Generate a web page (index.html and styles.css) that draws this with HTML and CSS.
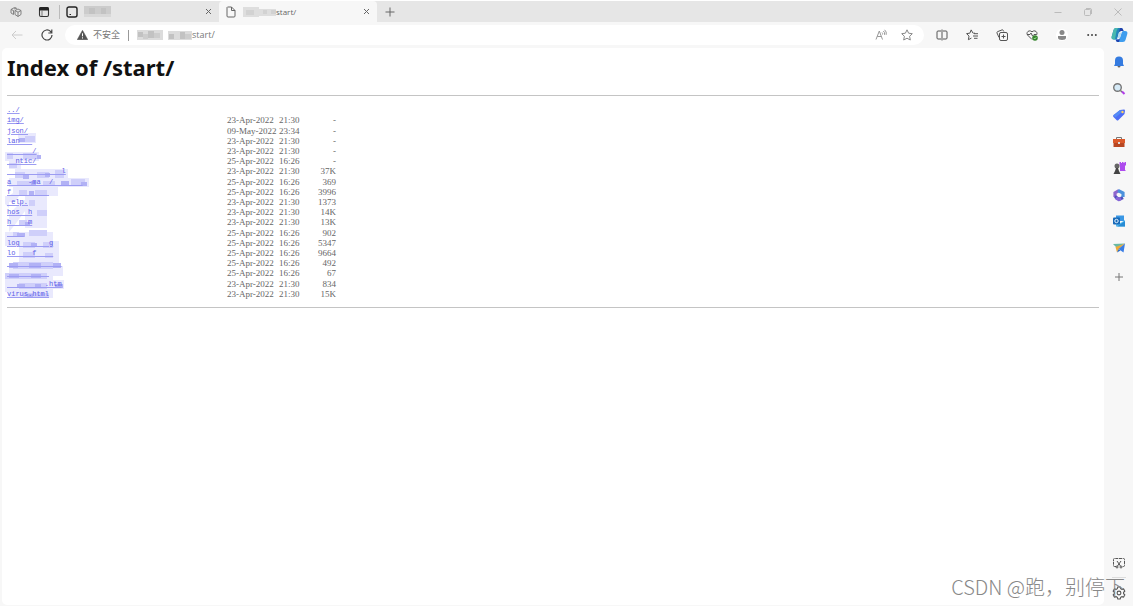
FILE: index.html
```
<!DOCTYPE html>
<html lang="zh-CN">
<head>
  <meta charset="UTF-8">
  <title>Index of /start/</title>
  <link rel="stylesheet" href="styles.css">
</head>
<body>

<div class="browser">
  <header class="tab-bar">
    <button class="icon-btn workspaces" aria-label="Workspaces">
      <svg width="12" height="12" viewBox="0 0 12 12" fill="none" stroke="#777" stroke-width=".9"><path d="M5 4.500l3-1.500 3 1.500v4l-3 2-3-2zM5 4.500l3 1.700 3-1.700M8 6.200v4.300M3.500 8.500L1 7V3.500L4.500 1.500 7 2.500M1 3.500l2.500 1M3.500 4.500v4M4 3l2-1"/></svg>
    </button>
    <button class="icon-btn tab-actions" aria-label="Tab actions">
      <svg width="12" height="12" viewBox="0 0 12 12"><rect x="1.500" y="1.500" width="9" height="9" rx="1.500" fill="none" stroke="#333" stroke-width="1.100"/><path d="M1 3a2 2 0 0 1 2-2h6a2 2 0 0 1 2 2v1.500H1z" fill="#222"/><path d="M4 4v6" stroke="#777"/></svg>
    </button>
    <div class="tab tab-first">
      <svg width="12" height="12" viewBox="0 0 12 12" fill="none" stroke="#222" stroke-width="1.400"><rect x="1" y="1" width="10" height="10" rx="2"/><path d="M3.500 8.500h1.500" stroke-width="1.200"/></svg>
      <svg class="blot" width="27" height="11" viewBox="0 0 27 11"><path fill="#ccc" d="M0 0h27v11H0z"/><path fill="#c2c2c2" d="M5 2h6v6H5zM17 2h5v6h-5z"/><path fill="#d8d8d8" d="M0 8h27v3H0z"/></svg>
      <button class="close" aria-label="Close tab"><svg width="7" height="7" viewBox="0 0 7 7"><path d="M1 1l5 5M6 1L1 6" stroke="#666"/></svg></button>
    </div>
    <div class="tab tab-active">
      <svg width="10" height="12" viewBox="0 0 10 12" fill="none" stroke="#666"><path d="M1.500 1h4L9 4.500V10a1 1 0 0 1-1 1H2a1 1 0 0 1-1-1V1.500zM5.500 1v3.500H9"/></svg>
      <svg class="blot" width="33" height="10" viewBox="0 0 33 10"><path fill="#dedede" d="M0 0h16v10H0zM16 2h17v7H16z"/><path fill="#d2d2d2" d="M3 3h8v5H3zM20 3h4v4h-4zM28 3h5v4h-5z"/></svg>
      <span class="tab-title">start/</span>
      <button class="close" aria-label="Close tab"><svg width="7" height="7" viewBox="0 0 7 7"><path d="M1 1l5 5M6 1L1 6" stroke="#666"/></svg></button>
    </div>
    <button class="icon-btn new-tab" aria-label="New tab"><svg width="10" height="10" viewBox="0 0 10 10"><path d="M5 .5v9M.5 5h9" stroke="#666"/></svg></button>
    <div class="window-buttons">
      <button class="icon-btn" aria-label="Minimize"><svg width="8" height="8" viewBox="0 0 8 8"><path d="M.5 4.500h7" stroke="#bbb"/></svg></button>
      <button class="icon-btn" aria-label="Restore"><svg width="8" height="8" viewBox="0 0 8 8" fill="none" stroke="#bbb"><rect x=".5" y="1.500" width="6" height="6" rx="1"/><path d="M2 .5h4a1.500 1.500 0 0 1 1.500 1.500v4"/></svg></button>
      <button class="icon-btn" aria-label="Close"><svg width="8" height="8" viewBox="0 0 8 8"><path d="M.5.5l7 7M7.500.5l-7 7" stroke="#bbb"/></svg></button>
    </div>
  </header>

  <nav class="toolbar">
    <button class="icon-btn back" aria-label="Back"><svg width="12" height="10" viewBox="0 0 12 10" fill="none" stroke="#ccc"><path d="M11.500 5H1M5 1L1 5l4 4"/></svg></button>
    <button class="icon-btn reload" aria-label="Reload"><svg width="12" height="12" viewBox="0 0 12 12" fill="none" stroke="#444" stroke-width="1.200"><path d="M11 6a5 5 0 1 1-1.500-3.600L10.800 4M10.800.5V4H7.300"/></svg></button>
    <div class="address">
      <svg width="11" height="10" viewBox="0 0 11 10"><path d="M5.500.3L10.800 9.700H.2z" fill="#555" stroke="#555" stroke-width=".5" stroke-linejoin="round"/><path d="M5.500 3.300v3M5.500 7.300v1.200" stroke="#fff"/></svg>
      <label class="not-secure" for="url">不安全</label>
      <span class="divider"></span>
      <svg class="blot" width="55" height="10" viewBox="0 0 55 10"><path fill="#dcdcdc" d="M0 0h26v10H0zM31 1h24v9H31z"/><path fill="#c2c2c2" d="M1 2h5v5H1zM11 1h6v7h-6zM32 4h5v5h-5zM43 2h5v7h-5z"/><path fill="#cdcdcd" d="M6 4h5v5H6zM17 3h6v5h-6zM48 4h6v5h-6z"/></svg>
      <input class="url" id="url" type="text" value="start/">
      <button class="icon-btn" aria-label="Read aloud"><svg width="12" height="12" viewBox="0 0 12 12" fill="none" stroke="#999"><path d="M1 10.500L4.300 2l3.200 8.500M2.200 7.500h4.200M7 3.500q1 1 .5 2M8.300 2q2 1.500 1.200 3.800M9.600.8q2.400 2 1.600 5"/></svg></button>
      <button class="icon-btn" aria-label="Add to favorites"><svg width="12" height="12" viewBox="0 0 12 12" fill="none" stroke="#888"><path d="M6 .8l1.600 3.400 3.700.5-2.700 2.600.7 3.700L6 9.200 2.700 11l.7-3.700L.7 4.700l3.700-.5z"/></svg></button>
    </div>
    <div class="tools">
      <button class="icon-btn" aria-label="Split screen"><svg width="12" height="12" viewBox="0 0 12 12" fill="none" stroke="#555"><path d="M5 2H2a1 1 0 0 0-1 1v6a1 1 0 0 0 1 1h3M7 2h3a1 1 0 0 1 1 1v6a1 1 0 0 1-1 1H7M6 .5v11"/></svg></button>
      <button class="icon-btn" aria-label="Favorites"><svg width="12" height="12" viewBox="0 0 12 12" fill="none" stroke="#555"><path d="M7.300 4.200H9M7 4.200L5.200.9 3.800 4.200.6 4.600l2.400 2.500-.6 3.600 3-1.600M8 4.700h4M7 7h5M8 9.300h3.500"/></svg></button>
      <button class="icon-btn" aria-label="Collections"><svg width="12" height="12" viewBox="0 0 12 12" fill="none" stroke="#555"><path d="M3 8.500L1 4a1 1 0 0 1 .5-1.300L6 .9a1 1 0 0 1 1.300.6l.5 1"/><rect x="3.500" y="3.500" width="8" height="8" rx="1.500"/><path d="M7.500 5.500v4M5.500 7.500h4"/></svg></button>
      <button class="icon-btn" aria-label="Browser essentials"><svg width="12" height="12" viewBox="0 0 12 12" fill="none" stroke="#555"><path d="M6 10.500L1.500 6C-.3 3.500 3 .2 6 2.800 9 .2 12.300 3.500 10.500 6M1 5.500h3l1-1.500 1.500 3L8 5.500h2"/><circle cx="9" cy="9" r="2.800" fill="#37862f" stroke="none"/><path d="M7.800 9l1 1 1.500-1.800" stroke="#cfc" stroke-width=".7"/></svg></button>
      <button class="icon-btn profile" aria-label="Profile"><svg width="12" height="12" viewBox="0 0 12 12" fill="#888"><circle cx="6" cy="3.500" r="2.500"/><path d="M2 7h8v1.500C10 10.300 8.500 11 6 11S2 10.300 2 8.500z"/></svg></button>
      <button class="icon-btn" aria-label="Settings and more"><svg width="12" height="12" viewBox="0 0 12 12" fill="#444"><circle cx="2.200" cy="6" r="1"/><circle cx="6" cy="6" r="1"/><circle cx="9.800" cy="6" r="1"/></svg></button>
    </div>
    <button class="icon-btn copilot" aria-label="Copilot">
      <svg width="17" height="16" viewBox="0 0 17 16"><path d="M5 1h5q1.500 0 2 1.500L12.500 4H10q-1.500 0-2 1.500L6.500 11Q6 12.500 4.500 12.500H3Q0 12.500.7 9.500L2.500 3Q3 1 5 1z" fill="#2385bd"/><path d="M2.500 3Q3 1 5 1h2L5.500 4 4 12.500H3Q0 12.500.7 9.500z" fill="#48b8ae"/><path d="M12.500 4H14q3 0 2.300 3L14.500 13q-.5 2-2.500 2H7q-1.500 0-2-1.500L4.500 12.500H7q1.500 0 2-1.500l1.500-5Q11 4 12.500 4z" fill="#3f9dee"/><path d="M9 1h1.500q1.200.3 1.500 1.500l.5 1.500H10q-1.500 0-2 1.500zM4.500 12.500H7Q8.500 12.500 9 11l.8-3L8 15H7q-1.500 0-2-1.500z" fill="#2042ad"/><path d="M8 5.500L6.500 11h2.300l1.700-5z" fill="#b9dcf2"/></svg>
    </button>
  </nav>

  <div class="main">
    <main class="page">
      <h1>Index of /start/</h1>
      <hr>
      <div class="listing">
        <!-- pixelated patches over the private file names -->
        <svg class="mosaic" width="90" height="196" viewBox="0 0 90 196">
          <path fill="#e9e9fd" d="M13 31h18v10H13zM0 50h34v9H0zM4 59h12v8H4zM10 67h53v9H10zM4 76h80v9H4zM8 85h45v9H8zM0 94h4l8-6h6l-8 12h-6v6l-4-4zM20 94h22v32H20zM4 112l14-14h10L12 120l-8 10zM0 130h48v14H0zM14 139h40v30H14zM4 164h54v10H4zM0 174h48v16H0zM16 178h43v9H16zM4 186h44v10H4z"/>
          <path fill="#cfcffa" d="M20 34h10v6H20zM2 51h6v6H2zM18 51h14v6H18zM4 61h8v5H4zM10 70h10v6H10zM32 70h12v6H32zM50 68h9v8H50zM12 79h14v5H12zM38 79h12v5H38zM66 77h14v6H66zM14 88h8v5h-8zM30 88h12v5H30zM24 98h6v6h-6zM32 108h10v6H32zM14 118h8v5h-8zM24 128h18v6H24zM8 130h6v5H8zM18 140h12v6H18zM38 140h10v6H38zM18 150h12v6H18zM40 151h8v5h-8zM8 160h40v7H8zM0 171h42v6H0zM14 181h28v6H14zM18 191h26v5H18z"/>
          <path fill="#b2b2f5" d="M14 36h6v4h-6zM32 53h4v4h-4zM18 73h6v4h-6zM40 71h5v4h-5zM26 79h5v4h-5zM56 79h8v4h-8zM76 80h6v4h-6zM24 89h5v4h-5zM20 120h5v4h-5zM12 131h8v4h-8zM26 141h6v4h-6zM4 161h9v5H4zM24 161h12v5H24zM48 161h8v5h-8zM4 172h10v4H4zM26 172h10v4H26zM12 182h8v4h-8zM30 182h6v4h-6zM50 182h8v4h-8zM22 192h6v4h-6z"/>
        </svg>
        <table>
          <tr><td class="name"><a href="#">../</a></td><td class="date"></td><td class="time"></td><td class="size"></td></tr>
          <tr><td class="name"><a href="#">img/</a></td><td class="date">23-Apr-2022</td><td class="time">21:30</td><td class="size">-</td></tr>
          <tr><td class="name"><a href="#">json/</a></td><td class="date">09-May-2022</td><td class="time">23:34</td><td class="size">-</td></tr>
          <tr><td class="name"><a href="#">lan&nbsp;&nbsp;&nbsp;</a></td><td class="date">23-Apr-2022</td><td class="time">21:30</td><td class="size">-</td></tr>
          <tr><td class="name"><a href="#">&nbsp;&nbsp;&nbsp;&nbsp;&nbsp;&nbsp;/</a></td><td class="date">23-Apr-2022</td><td class="time">21:30</td><td class="size">-</td></tr>
          <tr><td class="name"><a href="#">&nbsp;&nbsp;ntic/</a></td><td class="date">25-Apr-2022</td><td class="time">16:26</td><td class="size">-</td></tr>
          <tr><td class="name"><a href="#">&nbsp;&nbsp;&nbsp;&nbsp;&nbsp;&nbsp;&nbsp;&nbsp;&nbsp;&nbsp;&nbsp;&nbsp;&nbsp;l</a></td><td class="date">23-Apr-2022</td><td class="time">21:30</td><td class="size">37K</td></tr>
          <tr><td class="name"><a href="#">a&nbsp;&nbsp;&nbsp;&nbsp;-ma&nbsp;&nbsp;/&nbsp;&nbsp;&nbsp;&nbsp;&nbsp;&nbsp;&nbsp;</a></td><td class="date">25-Apr-2022</td><td class="time">16:26</td><td class="size">369</td></tr>
          <tr><td class="name"><a href="#">f&nbsp;&nbsp;&nbsp;&nbsp;&nbsp;&nbsp;&nbsp;&nbsp;&nbsp;</a></td><td class="date">25-Apr-2022</td><td class="time">16:26</td><td class="size">3996</td></tr>
          <tr><td class="name"><a href="#">&nbsp;elp.</a></td><td class="date">23-Apr-2022</td><td class="time">21:30</td><td class="size">1373</td></tr>
          <tr><td class="name"><a href="#">hos&nbsp;&nbsp;h</a></td><td class="date">23-Apr-2022</td><td class="time">21:30</td><td class="size">14K</td></tr>
          <tr><td class="name"><a href="#">h&nbsp;&nbsp;&nbsp;&nbsp;m</a></td><td class="date">23-Apr-2022</td><td class="time">21:30</td><td class="size">13K</td></tr>
          <tr><td class="name"><a href="#">&nbsp;&nbsp;&nbsp;&nbsp;</a></td><td class="date">25-Apr-2022</td><td class="time">16:26</td><td class="size">902</td></tr>
          <tr><td class="name"><a href="#">log&nbsp;&nbsp;&nbsp;&nbsp;&nbsp;&nbsp;&nbsp;g</a></td><td class="date">25-Apr-2022</td><td class="time">16:26</td><td class="size">5347</td></tr>
          <tr><td class="name"><a href="#">lo&nbsp;&nbsp;&nbsp;&nbsp;f&nbsp;&nbsp;&nbsp;&nbsp;</a></td><td class="date">25-Apr-2022</td><td class="time">16:26</td><td class="size">9664</td></tr>
          <tr><td class="name"><a href="#">&nbsp;&nbsp;&nbsp;&nbsp;&nbsp;&nbsp;&nbsp;&nbsp;&nbsp;&nbsp;&nbsp;&nbsp;&nbsp;</a></td><td class="date">25-Apr-2022</td><td class="time">16:26</td><td class="size">492</td></tr>
          <tr><td class="name"><a href="#">&nbsp;&nbsp;&nbsp;&nbsp;&nbsp;&nbsp;&nbsp;&nbsp;&nbsp;&nbsp;</a></td><td class="date">25-Apr-2022</td><td class="time">16:26</td><td class="size">67</td></tr>
          <tr><td class="name"><a href="#">&nbsp;&nbsp;&nbsp;&nbsp;&nbsp;&nbsp;&nbsp;&nbsp;&nbsp;.htm</a></td><td class="date">23-Apr-2022</td><td class="time">21:30</td><td class="size">834</td></tr>
          <tr><td class="name"><a href="#">virus.html</a></td><td class="date">23-Apr-2022</td><td class="time">21:30</td><td class="size">15K</td></tr>
        </table>
      </div>
      <hr>
    </main>

    <aside class="sidebar">
      <div class="apps">
        <button class="icon-btn" aria-label="Notifications"><svg width="14" height="14" viewBox="0 0 14 14"><path d="M7 1.500a4 4 0 0 1 4 4V9l1 2H2l1-2V5.500a4 4 0 0 1 4-4z" fill="#347be0"/><path d="M5.500 11h3a1.500 1.500 0 0 1-3 0z" fill="#666"/></svg></button>
        <button class="icon-btn" aria-label="Search"><svg width="14" height="14" viewBox="0 0 14 14"><circle cx="5.500" cy="5.500" r="3.800" fill="#d5eaf7" stroke="#777" stroke-width="1.400"/><path d="M8.500 8.500l1.500 1.500" stroke="#777" stroke-width="1.500"/><path d="M10 9.500l2.500 2.500" stroke="#b13de8" stroke-width="2"/></svg></button>
        <button class="icon-btn" aria-label="Shopping"><svg width="14" height="14" viewBox="0 0 14 14"><path d="M8 2l4-.5q1 0 1 1L12.500 6l-6 6q-1 1-2 0l-3-3q-1-1 0-2z" fill="#4d6df5"/><path d="M8 2L1.500 7.500l2 2L11 3z" fill="#548cf4"/><circle cx="10.500" cy="4" r="1.200" fill="#ffd25c"/></svg></button>
        <button class="icon-btn" aria-label="Tools"><svg width="14" height="14" viewBox="0 0 14 14"><path d="M4.500 4V2.500h5V4" fill="none" stroke="#777"/><path d="M1 4h12v4H1z" fill="#db592a"/><path d="M1.500 8h11v4h-11z" fill="#b84722"/><path d="M6 7h2v2H6z" fill="#ddd"/></svg></button>
        <button class="icon-btn" aria-label="Games"><svg width="14" height="14" viewBox="0 0 14 14"><path d="M7.500 1H9v1h1V1h1.500v1h1V1H14v3l-1 1v4l1 1H8V5l-.5-1z" fill="#ae4cee"/><circle cx="5" cy="5" r="2.500" fill="#666"/><path d="M4 7h2l1 3 1.500 3h-7L3 10z" fill="#444"/></svg></button>
        <button class="icon-btn" aria-label="Microsoft 365"><svg width="14" height="14" viewBox="0 0 14 14" fill="none" stroke-width="3.200"><path d="M7 2.500L3 5v4" stroke="#8d66cc"/><path d="M3 8.500L7 11.500l4-2" stroke="#4c51bd"/><path d="M6 2.500l5 2.500v4" stroke="#4b91dc"/><path d="M4 10l3 1.500 2-1" stroke="#8865d8"/></svg></button>
        <button class="icon-btn" aria-label="Outlook"><svg width="14" height="14" viewBox="0 0 14 14"><path d="M4 1.500h8V7H4z" fill="#3997e5"/><path d="M4 6l4.500 3L13 6v6.500H4z" fill="#54baf0"/><path d="M5 12.500L13 7v5.500z" fill="#278bd4"/><rect x="1" y="3.500" width="7" height="7" rx="1" fill="#1769b8"/><circle cx="4.500" cy="7" r="1.700" fill="none" stroke="#e6f4ff"/></svg></button>
        <button class="icon-btn" aria-label="Drop"><svg width="14" height="14" viewBox="0 0 14 14"><path d="M1 3l12-.5L5 7z" fill="#69b9a4"/><path d="M3.500 6L13 2.500 6.500 8.500 5 11.500z" fill="#edaa39"/><path d="M6.500 8L13 2.500 11.500 11.500z" fill="#397de5"/><path d="M5 11.500l1.500-3.300L8.500 9.500z" fill="#286ac8"/></svg></button>
      </div>
      <button class="icon-btn" aria-label="Customize"><svg width="10" height="10" viewBox="0 0 10 10"><path d="M5 1v8M1 5h8" stroke="#777"/></svg></button>
      <div class="sidebar-bottom">
        <button class="icon-btn" aria-label="Screenshot"><svg width="14" height="14" viewBox="0 0 14 14" fill="none" stroke="#555"><path d="M4 10.500H2.500a1 1 0 0 1-1-1V3.500a1 1 0 0 1 1-1h9a1 1 0 0 1 1 1v6a1 1 0 0 1-1 1H10" stroke-dasharray="3 .7"/><path d="M5 5l3.500 5M9 5l-3.500 5"/><circle cx="5" cy="11" r="1"/><circle cx="9" cy="11" r="1"/></svg></button>
        <button class="icon-btn settings" aria-label="Settings"><svg width="14" height="14" viewBox="0 0 14 14" fill="none" stroke="#555" stroke-width="1.100"><path d="M5.800 1h2.400l.5 1.700 1.200.7 1.700-.4 1.200 2.100L11.600 6.300v1.400l1.200 1.200-1.200 2.100-1.700-.4-1.200.7-.5 1.700H5.800l-.5-1.700-1.200-.7-1.700.4-1.200-2.100 1.200-1.200V6.300L1.200 5.100 2.400 3l1.700.4 1.200-.7z"/><circle cx="7" cy="7" r="1.900"/></svg></button>
      </div>
    </aside>
  </div>

  <span class="watermark">CSDN @跑，别停下</span>
</div>

</body>
</html>
```
FILE: styles.css
```
* {
  box-sizing: border-box;
}

body {
  margin: 0;
  background: #fff;
  font-family: "Open Sans", "Noto Sans CJK SC", sans-serif;
}

button {
  padding: 0;
  border: 0;
  background: none;
}

svg {
  display: block;
  flex: none;
}

.browser {
  position: relative;
  display: flex;
  flex-direction: column;
  min-height: 100vh;
  padding: 1px 6px 0 0;
}

.icon-btn {
  display: flex;
  align-items: center;
  justify-content: center;
  flex: none;
}

/* tabs */
.tab-bar {
  display: flex;
  align-items: stretch;
  height: 21px;
  padding-left: 10px;
  background: #e6e6e6;
}

.tab-actions {
  margin: 0 9px 0 16px;
}

.tab {
  display: flex;
  align-items: center;
  padding: 0 7px;
}

.tab-first {
  width: 160px;
  position: relative;
}

.tab-first::before {
  content: "";
  position: absolute;
  left: 0;
  top: 4px;
  height: 14px;
  border-left: 1px solid #bbb;
}

.tab-first .blot {
  margin-left: 6px;
}

.tab-active {
  width: 158px;
  border-radius: 4px 4px 0 0;
  background: #f7f7f7;
}

.tab-active .blot {
  margin-left: 7px;
}

.tab-title {
  color: #666;
  font-size: 8px;
  line-height: 12px;
}

.close {
  margin-left: auto;
}

.new-tab {
  width: 25px;
}

.window-buttons {
  display: flex;
  gap: 22px;
  margin-left: auto;
  padding-right: 11px;
}

/* toolbar */
.toolbar {
  display: flex;
  align-items: center;
  height: 26px;
  padding: 0 5px 0 11px;
  background: #f7f7f7;
}

.reload {
  margin: 0 12px 0 18px;
}

.address {
  display: flex;
  flex: 1;
  align-items: center;
  gap: 14px;
  height: 20px;
  padding: 0 11px 0 12px;
  border-radius: 10px;
  background: #fff;
}

.not-secure {
  margin-left: -9px;
  color: #777;
  font-size: 9px;
  line-height: 12px;
}

.divider {
  height: 11px;
  margin: 0 -6px 0 -6px;
  border-left: 1px solid #999;
}

.url {
  flex: 1;
  min-width: 0;
  margin-left: -14px;
  padding: 0;
  border: 0;
  outline: 0;
  background: none;
  color: #777;
  font-family: inherit;
  font-size: 9px;
  line-height: 12px;
}

.tools {
  display: flex;
  gap: 18px;
  margin: 0 13px 0 12px;
}

.profile {
  border-radius: 50%;
  background: #fff;
}

/* page and sidebar */
.main {
  display: flex;
  flex: 1;
  padding: 0 0 1px 2px;
  background: #f7f7f7;
}

.page {
  flex: 1;
  padding: 5px 5px 0;
  border-radius: 5px;
  background: #fff;
}

h1 {
  margin: 0 0 14px;
  color: #111;
  font-family: "Noto Sans", sans-serif;
  font-size: 22px;
  line-height: 28px;
}

hr {
  height: 1px;
  margin: 0;
  border: 0;
  background: #c4c4c4;
}

.listing {
  position: relative;
  padding: 9px 0 8px;
}

table {
  position: relative;
  height: 194px;
  border-collapse: collapse;
  color: #666;
  font-family: "Liberation Serif", serif;
  font-size: 9px;
  line-height: 10px;
}

td {
  padding: 0;
  white-space: nowrap;
}

.name {
  width: 220px;
  font-family: "Liberation Mono", monospace;
  font-size: 7px;
}

.name a {
  color: #5c5ce8;
  text-decoration-color: #9c9cf2;
}

.date {
  width: 52px;
}

.time {
  width: 22px;
}

.size {
  width: 35px;
  text-align: right;
}

.mosaic {
  position: absolute;
  left: -2px;
  top: 6px;
}

.sidebar {
  display: flex;
  flex-direction: column;
  align-items: center;
  width: 29px;
  padding: 7px 0 5px;
}

.apps {
  display: flex;
  flex-direction: column;
  justify-content: space-between;
  height: 200px;
  margin-bottom: 17px;
}

.sidebar-bottom {
  display: flex;
  flex-direction: column;
  gap: 7px;
  margin-top: auto;
}

.settings {
  padding-top: 8px;
  border-top: 1px solid #ddd;
}

.watermark {
  position: absolute;
  right: 14px;
  bottom: 4px;
  color: #888;
  font-family: "Noto Sans CJK SC", sans-serif;
  font-size: 20px;
  font-weight: 300;
  line-height: 30px;
  pointer-events: none;
}
```
